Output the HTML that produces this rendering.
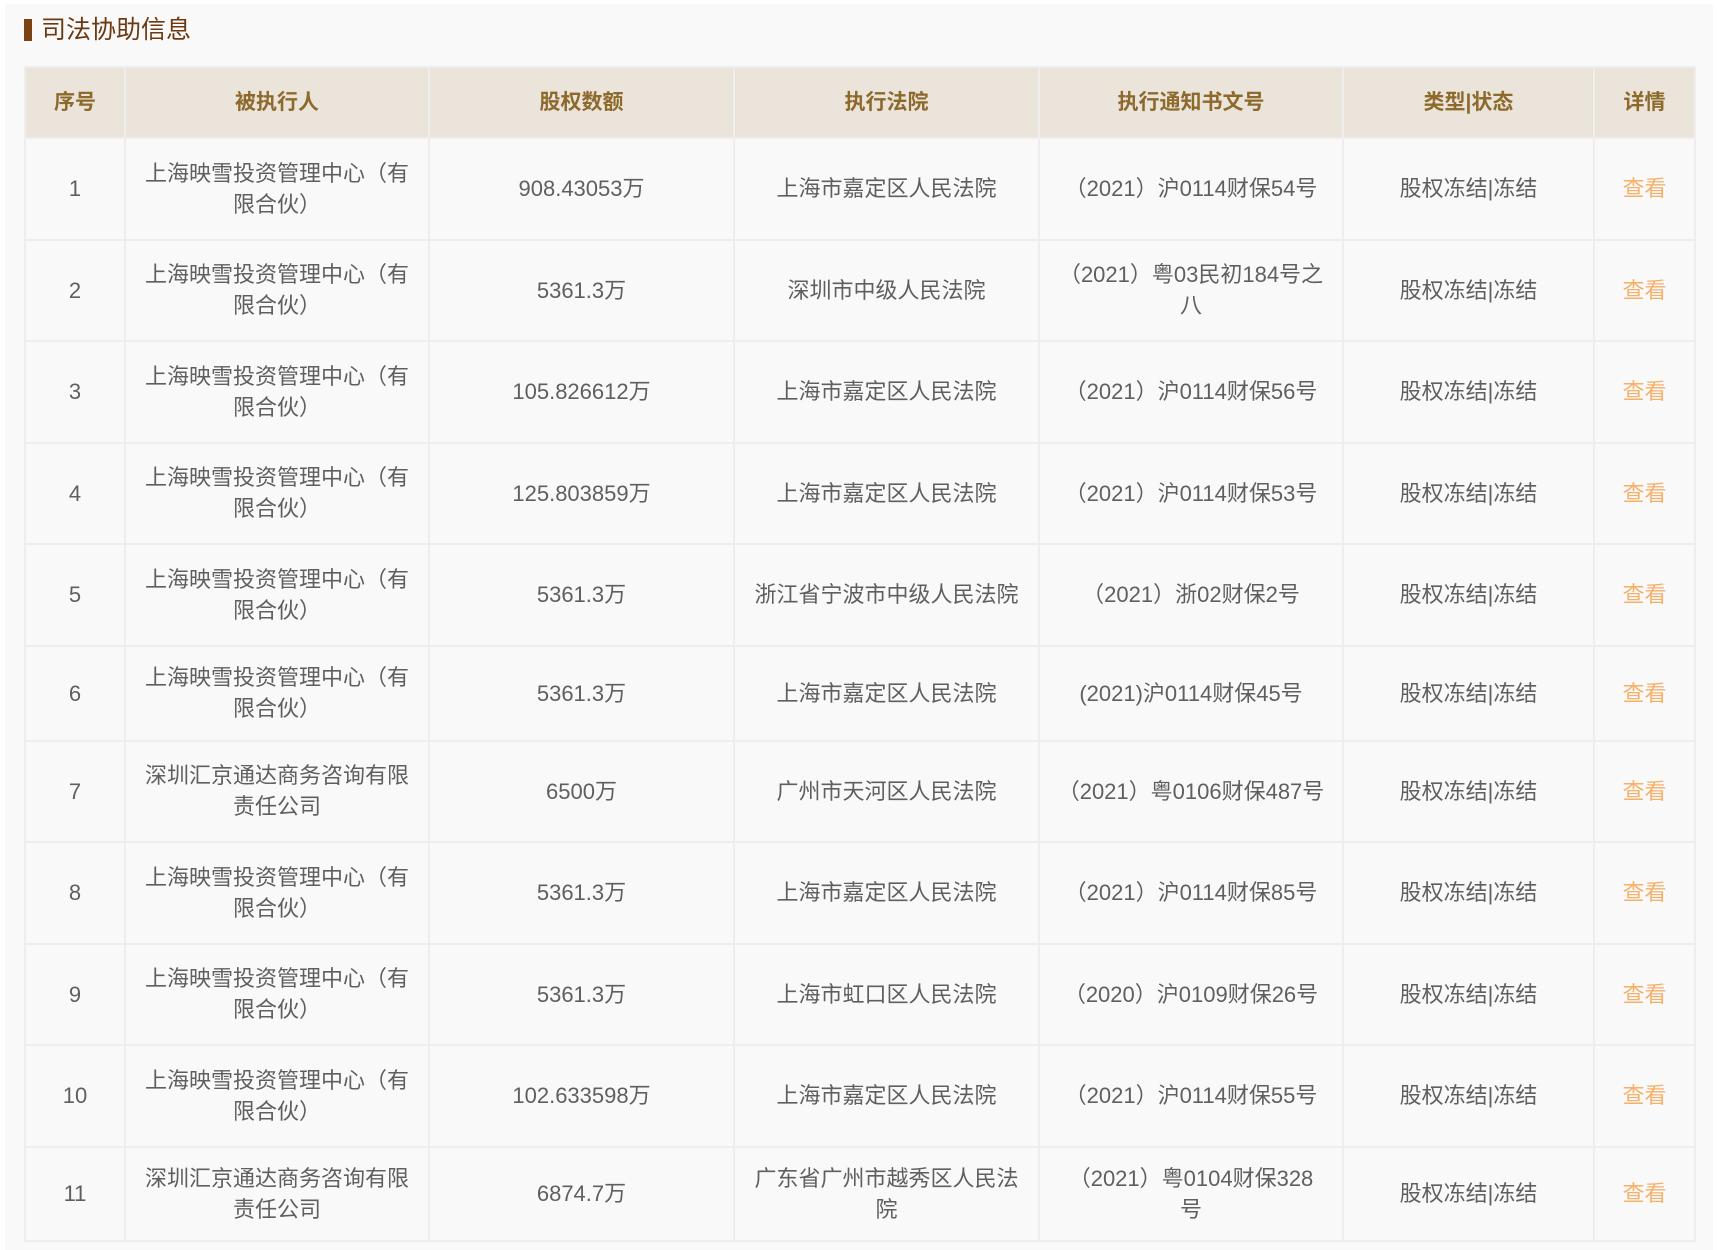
<!DOCTYPE html>
<html><head><meta charset="utf-8"><style>
html,body{margin:0;padding:0;background:#fff;}
body{width:1718px;height:1250px;overflow:hidden;font-family:"Liberation Sans","Noto Sans CJK SC",sans-serif;}
.panel{position:absolute;left:5px;top:4px;width:1708px;height:1246px;background:#f9f9f9;}
.title{position:absolute;left:24px;top:15px;height:30px;line-height:30px;font-size:25px;color:#6b3a12;}
.title:before{content:"";display:inline-block;width:8px;height:22px;background:#7a4212;vertical-align:-3px;margin-right:9px;}
table{position:absolute;left:24px;top:66px;border-collapse:collapse;table-layout:fixed;width:1670px;}
td,th{border:2px solid #eeeeee;text-align:center;font-size:22px;line-height:31px;padding:0 12px;color:#5f5f5f;}
th{background:#ebe4da;color:#8d6a2c;height:69px;font-weight:bold;font-size:21px;}
td{height:99.5px;background:#f9f9f9;}
tr.s6 td{height:93px;}
tr.s11 td{height:92px;}
td a{color:#f5b06a;text-decoration:none;}
</style></head><body>
<div class="panel"></div>
<div class="title">司法协助信息</div>
<table>
<colgroup><col style="width:100px"><col style="width:304px"><col style="width:305px"><col style="width:305px"><col style="width:304px"><col style="width:251px"><col style="width:101px"></colgroup>
<tr><th>序号</th><th>被执行人</th><th>股权数额</th><th>执行法院</th><th>执行通知书文号</th><th>类型|状态</th><th>详情</th></tr>
<tr><td>1</td><td>上海映雪投资管理中心（有限合伙）</td><td>908.43053万</td><td>上海市嘉定区人民法院</td><td>（2021）沪0114财保54号</td><td>股权冻结|冻结</td><td><a>查看</a></td></tr>
<tr><td>2</td><td>上海映雪投资管理中心（有限合伙）</td><td>5361.3万</td><td>深圳市中级人民法院</td><td>（2021）粤03民初184号之八</td><td>股权冻结|冻结</td><td><a>查看</a></td></tr>
<tr><td>3</td><td>上海映雪投资管理中心（有限合伙）</td><td>105.826612万</td><td>上海市嘉定区人民法院</td><td>（2021）沪0114财保56号</td><td>股权冻结|冻结</td><td><a>查看</a></td></tr>
<tr><td>4</td><td>上海映雪投资管理中心（有限合伙）</td><td>125.803859万</td><td>上海市嘉定区人民法院</td><td>（2021）沪0114财保53号</td><td>股权冻结|冻结</td><td><a>查看</a></td></tr>
<tr><td>5</td><td>上海映雪投资管理中心（有限合伙）</td><td>5361.3万</td><td>浙江省宁波市中级人民法院</td><td>（2021）浙02财保2号</td><td>股权冻结|冻结</td><td><a>查看</a></td></tr>
<tr class="s6"><td>6</td><td>上海映雪投资管理中心（有限合伙）</td><td>5361.3万</td><td>上海市嘉定区人民法院</td><td>(2021)沪0114财保45号</td><td>股权冻结|冻结</td><td><a>查看</a></td></tr>
<tr><td>7</td><td>深圳汇京通达商务咨询有限责任公司</td><td>6500万</td><td>广州市天河区人民法院</td><td>（2021）粤0106财保487号</td><td>股权冻结|冻结</td><td><a>查看</a></td></tr>
<tr><td>8</td><td>上海映雪投资管理中心（有限合伙）</td><td>5361.3万</td><td>上海市嘉定区人民法院</td><td>（2021）沪0114财保85号</td><td>股权冻结|冻结</td><td><a>查看</a></td></tr>
<tr><td>9</td><td>上海映雪投资管理中心（有限合伙）</td><td>5361.3万</td><td>上海市虹口区人民法院</td><td>（2020）沪0109财保26号</td><td>股权冻结|冻结</td><td><a>查看</a></td></tr>
<tr><td>10</td><td>上海映雪投资管理中心（有限合伙）</td><td>102.633598万</td><td>上海市嘉定区人民法院</td><td>（2021）沪0114财保55号</td><td>股权冻结|冻结</td><td><a>查看</a></td></tr>
<tr class="s11"><td>11</td><td>深圳汇京通达商务咨询有限责任公司</td><td>6874.7万</td><td>广东省广州市越秀区人民法院</td><td>（2021）粤0104财保328<br>号</td><td>股权冻结|冻结</td><td><a>查看</a></td></tr>
</table>
</body></html>
